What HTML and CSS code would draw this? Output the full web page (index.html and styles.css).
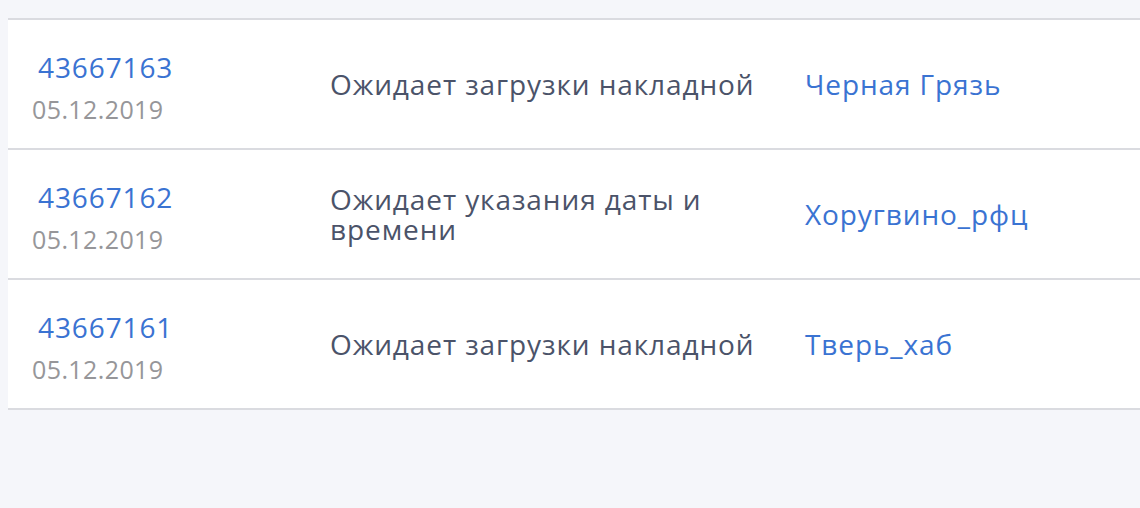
FILE: index.html
```html
<!DOCTYPE html>
<html lang="ru">
<head>
<meta charset="utf-8">
<link rel="stylesheet" href="styles.css">
</head>
<body>
<div class="table">
  <div class="row">
    <div class="cell-id">
      <a class="num">43667163</a>
      <div class="date">05.12.2019</div>
    </div>
    <div class="status">Ожидает загрузки накладной</div>
    <a class="place">Черная Грязь</a>
  </div>
  <div class="row">
    <div class="cell-id">
      <a class="num">43667162</a>
      <div class="date">05.12.2019</div>
    </div>
    <div class="status">Ожидает указания даты и<br>времени</div>
    <a class="place">Хоругвино_рфц</a>
  </div>
  <div class="row">
    <div class="cell-id">
      <a class="num">43667161</a>
      <div class="date">05.12.2019</div>
    </div>
    <div class="status">Ожидает загрузки накладной</div>
    <a class="place">Тверь_хаб</a>
  </div>
</div>
</body>
</html>
```
FILE: styles.css
```css
html, body {
  background: #f5f6fa;
}
body {
  margin: 18px 0 0 8px;
  font-family: "Open Sans", "Noto Sans", sans-serif;
}
.table {
  background: #fff;
  border-top: 2px solid #dadbe0;
}
.row {
  display: grid;
  grid-template-columns: 298px 475px 1fr;
  align-items: center;
  height: 128px;
  padding-left: 24px;
  border-bottom: 2px solid #dadbe0;
}
.cell-id {
  display: flex;
  flex-direction: column;
  padding-top: 3px;
}
.num {
  color: #3a73d2;
  font-size: 28px;
  letter-spacing: 0.9px;
  line-height: 43px;
  padding-left: 6px;
}
.date {
  color: #969699;
  font-size: 25px;
  letter-spacing: 0.4px;
  line-height: 34px;
  margin-top: 3px;
}
.status {
  color: #4b5369;
  font-size: 28px;
  letter-spacing: 0.9px;
  line-height: 30px;
}
.place {
  color: #3a73d2;
  font-size: 28px;
  letter-spacing: 0.9px;
  line-height: 30px;
}
```
